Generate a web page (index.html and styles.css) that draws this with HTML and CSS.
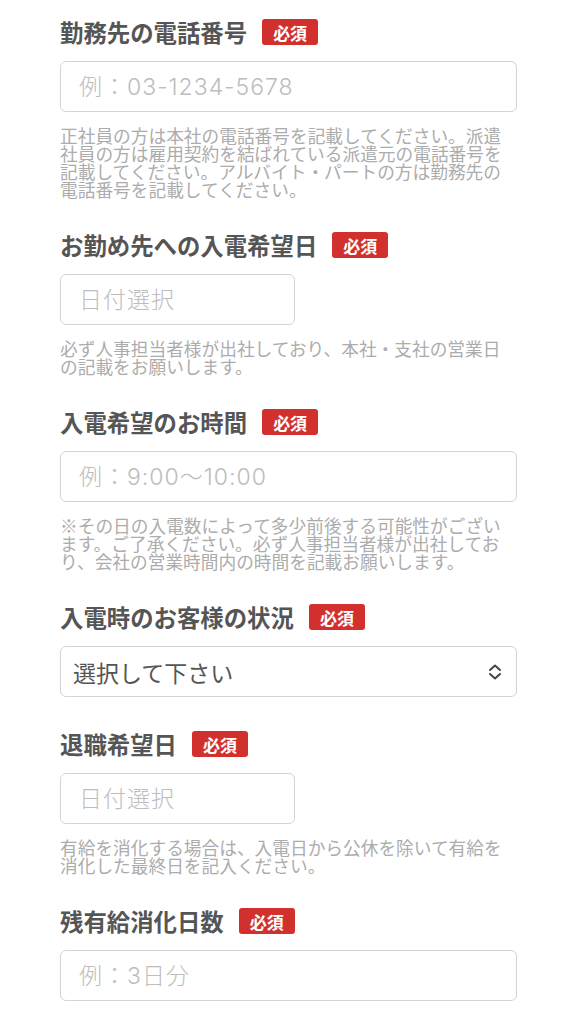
FILE: index.html
```html
<!DOCTYPE html>
<html lang="ja">
<head>
<meta charset="utf-8">
<title>フォーム</title>
<link rel="stylesheet" href="styles.css">
</head>
<body>
<form class="form">
  <div class="field">
    <div class="label-row"><span class="label">勤務先の電話番号</span><span class="badge">必須</span></div>
    <input class="input" type="text" placeholder="例：03-1234-5678">
    <p class="help">正社員の方は本社の電話番号を記載してください。派遣社員の方は雇用契約を結ばれている派遣元の電話番号を記載してください。アルバイト・パートの方は勤務先の電話番号を記載してください。</p>
  </div>
  <div class="field">
    <div class="label-row"><span class="label">お勤め先への入電希望日</span><span class="badge">必須</span></div>
    <input class="input short" type="text" placeholder="日付選択">
    <p class="help">必ず人事担当者様が出社しており、本社・支社の営業日の記載をお願いします。</p>
  </div>
  <div class="field">
    <div class="label-row"><span class="label">入電希望のお時間</span><span class="badge">必須</span></div>
    <input class="input" type="text" placeholder="例：9:00〜10:00">
    <p class="help">※その日の入電数によって多少前後する可能性がございます。ご了承ください。必ず人事担当者様が出社しており、会社の営業時間内の時間を記載お願いします。</p>
  </div>
  <div class="field">
    <div class="label-row"><span class="label">入電時のお客様の状況</span><span class="badge">必須</span></div>
    <div class="select">
      <span class="select-text">選択して下さい</span>
      <svg class="chevron" width="14" height="16" viewBox="0 0 14 16"><path d="M2 6 L7 1.5 L12 6 M2 10 L7 14.5 L12 10" fill="none" stroke="#444" stroke-width="2" stroke-linecap="round" stroke-linejoin="round"/></svg>
    </div>
  </div>
  <div class="field">
    <div class="label-row"><span class="label">退職希望日</span><span class="badge">必須</span></div>
    <input class="input short" type="text" placeholder="日付選択">
    <p class="help">有給を消化する場合は、入電日から公休を除いて有給を消化した最終日を記入ください。</p>
  </div>
  <div class="field">
    <div class="label-row"><span class="label">残有給消化日数</span><span class="badge">必須</span></div>
    <input class="input" type="text" placeholder="例：3日分">
  </div>
</form>
</body>
</html>
```
FILE: styles.css
```css
html, body {
  margin: 0;
  padding: 0;
  background: #ffffff;
}
body {
  font-family: "Noto Sans CJK JP", "Noto Sans", sans-serif;
}
.form {
  padding: 19px 60px 0 60px;
  display: flex;
  flex-direction: column;
}
.field {
  display: flex;
  flex-direction: column;
  margin-bottom: 34px;
}
.label-row {
  display: flex;
  align-items: center;
  gap: 15px;
  height: 26px;
}
.label {
  font-size: 23.4px;
  font-weight: 700;
  color: #555555;
  line-height: 26px;
  white-space: nowrap;
}
.badge {
  display: flex;
  align-items: center;
  justify-content: center;
  width: 56px;
  height: 26px;
  border-radius: 3px;
  background: #d1302d;
  color: #ffffff;
  font-size: 17px;
  font-weight: 700;
  line-height: 1;
}
.input {
  margin: 16px 0 0 0;
  box-sizing: border-box;
  width: 100%;
  height: 51px;
  border: 1.5px solid #d4d4d4;
  border-radius: 6px;
  padding: 0 18px;
  font-family: Inter, "Noto Sans CJK JP", sans-serif;
  font-size: 23px;
  font-weight: 300;
  letter-spacing: 1px;
  color: #555;
  background: #fff;
  outline: none;
}
.input::placeholder {
  color: #bdbdbd;
}
.short {
  width: 235px;
}
.help {
  margin: 14px 0 0 0;
  padding-right: 4px;
  font-size: 17.7px;
  line-height: 18px;
  color: #acacac;
}
.select {
  margin-top: 16px;
  box-sizing: border-box;
  height: 51px;
  border: 1.5px solid #d4d4d4;
  border-radius: 6px;
  padding: 0 14px 0 12px;
  display: flex;
  align-items: center;
  justify-content: space-between;
}
.select-text {
  font-size: 23px;
  color: #555;
}
.chevron {
  display: block;
}
```
